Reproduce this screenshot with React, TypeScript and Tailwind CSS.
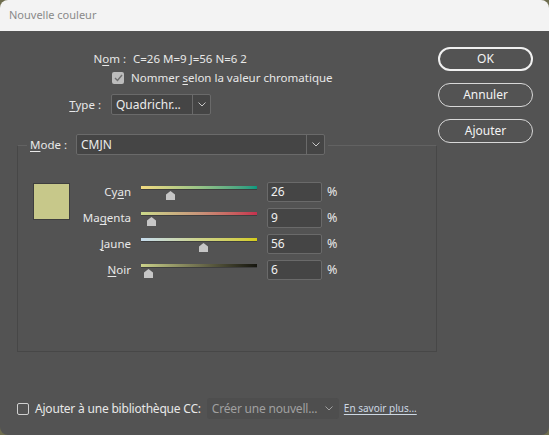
import React from "react";

const font = "font-['Segoe_UI','Noto_Sans',sans-serif]";

const Chevron = ({ className = "" }: { className?: string }) => (
  <svg width="8" height="5" viewBox="0 0 8 5" className={className}>
    <polyline points="0.5,0.5 4,4 7.5,0.5" fill="none" stroke="currentColor" strokeWidth="1" />
  </svg>
);

const Thumb = () => (
  <svg width="9" height="9" viewBox="0 0 9 9">
    <polygon points="4.5,0 9,3.5 9,9 0,9 0,3.5" fill="#c6c6c6" />
  </svg>
);

const Select = ({ text, width, arrow = 18 }: { text: string; width: number; arrow?: number }) => (
  <div
    className="flex h-[21px] rounded-[2px] border border-[#6a6a6a] bg-[#454545] text-[#ececec]"
    style={{ width }}
  >
    <div className="flex flex-1 items-center pl-[4px] text-[12px] leading-none">{text}</div>
    <div
      className="flex items-center justify-center border-l border-[#6a6a6a] text-[#c8c8c8]"
      style={{ width: arrow }}
    >
      <Chevron />
    </div>
  </div>
);

const sliders = [
  { pre: "Cy", key: "a", post: "n", value: 26, grad: "from-[#f2da80] via-[#98c487] to-[#00997f]" },
  { pre: "Ma", key: "g", post: "enta", value: 9, grad: "from-[#cbd98a] via-[#c8957a] to-[#c4304e]" },
  { pre: "", key: "J", post: "aune", value: 56, grad: "from-[#c6dcee] via-[#cdd38a] to-[#d4cc10]" },
  { pre: "", key: "N", post: "oir", value: 6, grad: "from-[#cbd28a] via-[#6f6f4e] to-[#16160f]" },
];

export default function App() {
  return (
    <div className={`h-[435px] w-[549px] bg-[#6e6d4e] text-[11.5px] ${font}`}>
      <div className="flex h-full w-full flex-col overflow-hidden rounded-[8px]">
        {/* Title bar */}
        <div className="flex h-[31px] shrink-0 items-center bg-[#f3f3f3] pl-[9px] text-[11px] text-[#8a8a8a]">
          Nouvelle couleur
        </div>

        {/* Body */}
        <div className="flex flex-1 flex-col bg-[#535353] text-[#e8e8e8]">
          <div className="flex">
            {/* Left column */}
            <div className="ml-[17px] w-[420px] pt-[18px]">
              <div className="flex h-[19px] items-center">
                <div className="w-[109px] text-right">
                  N<u className="underline-offset-2">o</u>m :
                </div>
                <div className="ml-[7px]">C=26 M=9 J=56 N=6 2</div>
              </div>

              <div className="flex h-[20px] items-center pl-[95px]">
                <div className="flex h-[12px] w-[12px] items-center justify-center rounded-[2px] bg-[#bcbcbc]">
                  <svg width="9" height="8" viewBox="0 0 9 8">
                    <polyline points="1,4 3.5,6.5 8,1" fill="none" stroke="#6e6e6e" strokeWidth="1.4" />
                  </svg>
                </div>
                <div className="ml-[7px]">
                  Nommer <u className="underline-offset-2">s</u>elon la valeur chromatique
                </div>
              </div>

              <div className="mt-[6px] flex h-[21px] items-center">
                <div className="w-[84px] text-right">
                  <u className="underline-offset-2">T</u>ype :
                </div>
                <div className="ml-[10px]">
                  <Select text="Quadrichr..." width={100} />
                </div>
              </div>

              {/* Group box */}
              <div className="mt-[30px] h-[207px] border border-[#474747] border-t-[#626262]">
                <div className="-mt-[12px] ml-[9px] flex w-fit items-center bg-[#535353] px-[3px]">
                  <div className="w-[46px]">
                    <u className="underline-offset-2">M</u>ode :
                  </div>
                  <Select text="CMJN" width={249} />
                </div>

                <div className="mt-[24px] flex pl-[15px]">
                  <div className="mt-[4px] h-[37px] w-[37px] border border-[#3e3e3e] bg-[#c7c88a]" />
                  <div className="flex flex-col">
                    {sliders.map((s) => (
                      <div key={s.post} className="flex h-[26px] items-center">
                        <div className="w-[61px] text-right">
                          {s.pre}
                          <u className="underline-offset-2">{s.key}</u>
                          {s.post}
                        </div>
                        <div className="relative ml-[10px] mt-[1px] h-[14px] w-[116px]">
                          <div className={`h-[4px] w-full border-b border-[#3e3e3e] bg-linear-to-r ${s.grad}`} />
                          <div
                            className="absolute top-[5px] leading-none"
                            style={{ left: Math.round(s.value * 1.1 + 1 - 4.5) }}
                          >
                            <Thumb />
                          </div>
                        </div>
                        <div className="ml-[10px] flex h-[20px] w-[55px] items-center rounded-[2px] border border-[#6a6a6a] bg-[#454545] pl-[3px] text-[12px] text-[#f0f0f0]">
                          {s.value}
                        </div>
                        <div className="ml-[5px] text-[12.5px]">%</div>
                      </div>
                    ))}
                  </div>
                </div>
              </div>
            </div>

            {/* Buttons */}
            <div className="ml-[1px] flex w-[95px] flex-col gap-[12px] pt-[16px]">
              <button className="h-[24px] rounded-full border-2 border-[#f0f0f0] text-[12px] text-[#f4f4f4]">OK</button>
              <button className="h-[24px] rounded-full border border-[#d8d8d8] text-[12px] text-[#f4f4f4]">Annuler</button>
              <button className="h-[24px] rounded-full border border-[#d8d8d8] text-[12px] text-[#f4f4f4]">Ajouter</button>
            </div>
          </div>

          {/* Bottom row */}
          <div className="mt-auto mb-[16px] flex h-[21px] items-center pl-[17px]">
            <div className="h-[12px] w-[12px] rounded-[2px] border border-[#d0d0d0]" />
            <div className="ml-[6px] text-[12px] tracking-[-0.2px]">Ajouter à une bibliothèque CC:</div>
            <div className="ml-[6px] flex h-[21px] w-[132px] items-center rounded-[3px] bg-[#4e4e4e] pl-[5px] pr-[6px] text-[12px] text-[#a0a0a0]">
              <div className="flex-1 tracking-[-0.2px]">Créer une nouvell...</div>
              <Chevron />
            </div>
            <div className="ml-[5px] text-[10px] text-[#cdd8e4] underline underline-offset-2">En savoir plus...</div>
          </div>
        </div>
      </div>
    </div>
  );
}
